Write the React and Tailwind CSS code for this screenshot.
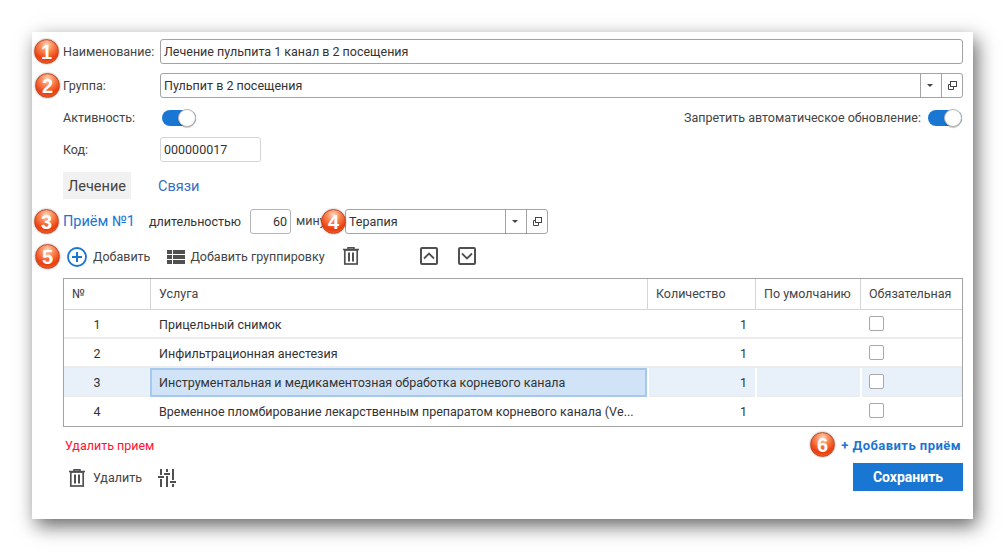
import React from 'react';

const Badge = ({ n, className }) => (
  <span
    className={`absolute flex h-[25px] w-[25px] items-center justify-center rounded-full border border-[#b9492a] bg-[radial-gradient(circle_at_50%_22%,#ffd9c2_0%,#fb8a58_30%,#ec3d0c_68%,#f9793a_100%)] font-['Liberation_Sans',sans-serif] text-[20px] font-bold text-white shadow-[0_0_2px_rgba(0,0,0,0.4)] ${className}`}
  >
    {n}
  </span>
);

const Toggle = () => (
  <span className="relative block h-[16px] w-[34px] rounded-full bg-[#1976d2]">
    <span className="absolute right-0 top-[-1px] h-[18px] w-[18px] rounded-full border border-[#b5b5b5] bg-white shadow-[0_1px_1px_rgba(0,0,0,0.25)]" />
  </span>
);

const CopyIcon = () => (
  <svg width="11" height="11" viewBox="0 0 11 11" fill="none" stroke="#444" strokeWidth="1">
    <rect x="3.5" y="1.5" width="6" height="5" />
    <path d="M3.5 4.5h-2v5h5v-3" />
  </svg>
);

const Caret = () => <span className="mr-[2px] block h-0 w-0 border-x-[3px] border-t-[3px] border-x-transparent border-t-[#444]" />;

const SelectBox = ({ value, className }) => (
  <div className={`flex h-[25px] items-stretch rounded-[3px] border border-[#a3a3a3] bg-white ${className}`}>
    <div className="flex-1 truncate pl-[3px] leading-[24px] text-[#333]">{value}</div>
    <div className="flex w-[21px] items-center justify-center border-l border-[#a3a3a3]"><Caret /></div>
    <div className="flex w-[21px] items-center justify-center border-l border-[#a3a3a3]"><CopyIcon /></div>
  </div>
);

const Trash = () => (
  <svg width="16" height="18" viewBox="0 0 16 18" fill="none" stroke="#505050">
    <path d="M0 2.5h16M5 2.5V.8h6v1.7" strokeWidth="1.5" />
    <rect x="1.8" y="3" width="12.4" height="14" strokeWidth="1.7" />
    <path d="M6 5.5v9M10 5.5v9" strokeWidth="2" />
  </svg>
);

const ListIcon = () => (
  <svg width="18" height="14" viewBox="0 0 18 14" fill="#505050">
    <rect x="0" y="0" width="5" height="4" />
    <rect x="6" y="0" width="12" height="4" />
    <rect x="0" y="5" width="5" height="4" />
    <rect x="6" y="5" width="12" height="4" />
    <rect x="0" y="10" width="5" height="4" />
    <rect x="6" y="10" width="12" height="4" />
  </svg>
);

const PlusCircle = () => (
  <svg width="20" height="20" viewBox="0 0 20 20" fill="none" stroke="#1976d2" strokeWidth="1.8">
    <circle cx="10" cy="10" r="9" />
    <path d="M10 5v10M5 10h10" strokeWidth="2" />
  </svg>
);

const ArrowBox = ({ down }) => (
  <svg width="18" height="18" viewBox="0 0 18 18" fill="none" stroke="#505050">
    <rect x="1" y="1" width="16" height="16" rx="1" strokeWidth="2" />
    <path d={down ? 'M4 6.5l5 5 5-5' : 'M4 11.5l5-5 5 5'} strokeWidth="1.8" />
  </svg>
);

const Sliders = () => (
  <svg width="18" height="18" viewBox="0 0 18 18" fill="none" stroke="#505050" strokeWidth="2">
    <path d="M3 0v6M3 10v8M9 0v3M9 7v11M15 0v11M15 15v3" />
    <path d="M0 8h6M6 5h6M12 13h6" />
  </svg>
);

const rows = [
  ['1', 'Прицельный снимок'],
  ['2', 'Инфильтрационная анестезия'],
  ['3', 'Инструментальная и медикаментозная обработка корневого канала'],
  ['4', 'Временное пломбирование лекарственным препаратом корневого канала (Vе...'],
];

const grid = 'grid grid-cols-[86px_497px_108px_105px_1fr]';

export default function App() {
  return (
    <div className="h-[552px] w-full overflow-hidden bg-white pl-[32px] pt-[32px] font-['Roboto',sans-serif] text-[12.5px] text-[#444]">
      <div className="relative h-[487px] w-[941px] bg-white pl-[31px] pr-[10px] pt-[7px] shadow-[4px_7px_18px_rgba(0,0,0,0.6)]">
        <div className="relative flex h-[25px] items-center">
          <Badge n="1" className="left-[-29px] top-0" />
          <div className="w-[97px] pt-[1px]">Наименование:</div>
          <div className="h-[25px] flex-1 rounded-[3px] border border-[#a3a3a3] pl-[3px] leading-[24px] text-[#333]">
            Лечение пульпита 1 канал в 2 посещения
          </div>
        </div>

        <div className="relative mt-[9px] flex h-[25px] items-center">
          <Badge n="2" className="left-[-28px] top-0" />
          <div className="w-[97px] pt-[2px]">Группа:</div>
          <SelectBox value="Пульпит в 2 посещения" className="flex-1" />
        </div>

        <div className="mt-[12px] flex h-[16px] items-center">
          <div className="w-[99px]">Активность:</div>
          <Toggle />
          <div className="ml-auto mr-[7px]">Запретить автоматическое обновление:</div>
          <span className="mr-[1px]"><Toggle /></span>
        </div>

        <div className="mt-[11px] flex h-[25px] items-center">
          <div className="w-[97px] pt-[2px]">Код:</div>
          <div className="h-[25px] w-[101px] rounded-[3px] border border-[#d5d5d5] pl-[3px] leading-[24px] text-[#333]">000000017</div>
        </div>

        <div className="mt-[10px] flex h-[27px] items-center text-[14.5px] leading-[28px]">
          <div className="flex h-[27px] w-[68px] items-center justify-center bg-[#f1f1f1] pt-[2px] text-[#444]">Лечение</div>
          <div className="ml-[27px] pt-[2px] text-[#3a6fc4]">Связи</div>
        </div>

        <div className="relative mt-[10px] flex h-[25px] items-center">
          <Badge n="3" className="left-[-29px] top-0" />
          <div className="w-[86px] pt-[1px] text-[14.5px] text-[#1976d2]">Приём №1</div>
          <div className="w-[101px] pt-[1px] text-[#333]">длительностью</div>
          <div className="h-[25px] w-[41px] rounded-[3px] border border-[#b5b5b5] pr-[3px] text-right leading-[24px] text-[#333]">60</div>
          <div className="ml-[5px] w-[49px] overflow-hidden whitespace-nowrap">мину</div>
          <SelectBox value="Терапия" className="w-[203px]" />
          <Badge n="4" className="left-[258px] top-0" />
        </div>

        <div className="relative mt-[10px] flex h-[25px] items-center">
          <Badge n="5" className="left-[-28px] top-0" />
          <span className="ml-[4px]"><PlusCircle /></span>
          <span className="ml-[6px] pt-[1px]">Добавить</span>
          <span className="ml-[17px]"><ListIcon /></span>
          <span className="ml-[5px] pt-[1px]">Добавить группировку</span>
          <span className="mb-[2px] ml-[18px]"><Trash /></span>
          <span className="mb-[2px] ml-[61px]"><ArrowBox /></span>
          <span className="mb-[2px] ml-[20px]"><ArrowBox down /></span>
        </div>

        <div className="mt-[9px] h-[149px] border border-[#a3a3a3]">
          <div className={`${grid} h-[31px] items-center border-b border-[#d5d5d5] leading-[30px]`}>
            {['№', 'Услуга', 'Количество', 'По умолчанию', 'Обязательная'].map((h, i) => (
              <div key={h} className={`h-[30px] pl-[8px] ${i > 0 ? 'border-l border-[#d5d5d5]' : ''}`}>{h}</div>
            ))}
          </div>
          {rows.map(([n, name], i) => {
            const sel = i === 2;
            return (
              <div key={n} className={`${grid} h-[29px] border-b-2 border-[#ececec] last:border-b-0 ${sel ? 'bg-[#e8f0fa]' : ''}`}>
                <div className="pr-[20px] text-center leading-[29px] text-[#333]">{n}</div>
                <div className={`truncate pl-[7px] leading-[26px] text-[#333] ${sel ? 'border-2 border-[#a6c8ee] bg-[#d0e3f7]' : 'border-2 border-transparent'}`}>{name}</div>
                <div className={`pr-[8px] text-right leading-[29px] text-[#333] ${sel ? 'border-l-2 border-white' : ''}`}>1</div>
                <div className={sel ? 'border-l-2 border-white' : ''} />
                <div className={`flex items-center pb-[2px] ${sel ? 'border-l-2 border-white pl-[7px]' : 'pl-[9px]'}`}>
                  <span className="block h-[15px] w-[15px] rounded-[2px] border border-[#a8a8a8] bg-white" />
                </div>
              </div>
            );
          })}
        </div>

        <div className="relative mt-[9px] flex h-[18px] items-center justify-between">
          <div className="pl-[2px] pt-[2px] text-[#ff1133]">Удалить прием</div>
          <div className="pr-[2px] pt-[1px] text-[13px] font-bold tracking-[0.45px] text-[#1976d2]">+ Добавить приём</div>
          <Badge n="6" className="right-[128px] top-[-4px]" />
        </div>

        <div className="mt-[9px] flex items-start justify-between">
          <div className="flex items-center pl-[6px] pt-[5px]">
            <Trash />
            <span className="ml-[8px] pt-[1px]">Удалить</span>
            <span className="ml-[16px]"><Sliders /></span>
          </div>
          <div className="flex h-[28px] w-[110px] items-center justify-center bg-[#1976d2] text-[14px] font-bold text-white">Сохранить</div>
        </div>
      </div>
    </div>
  );
}
